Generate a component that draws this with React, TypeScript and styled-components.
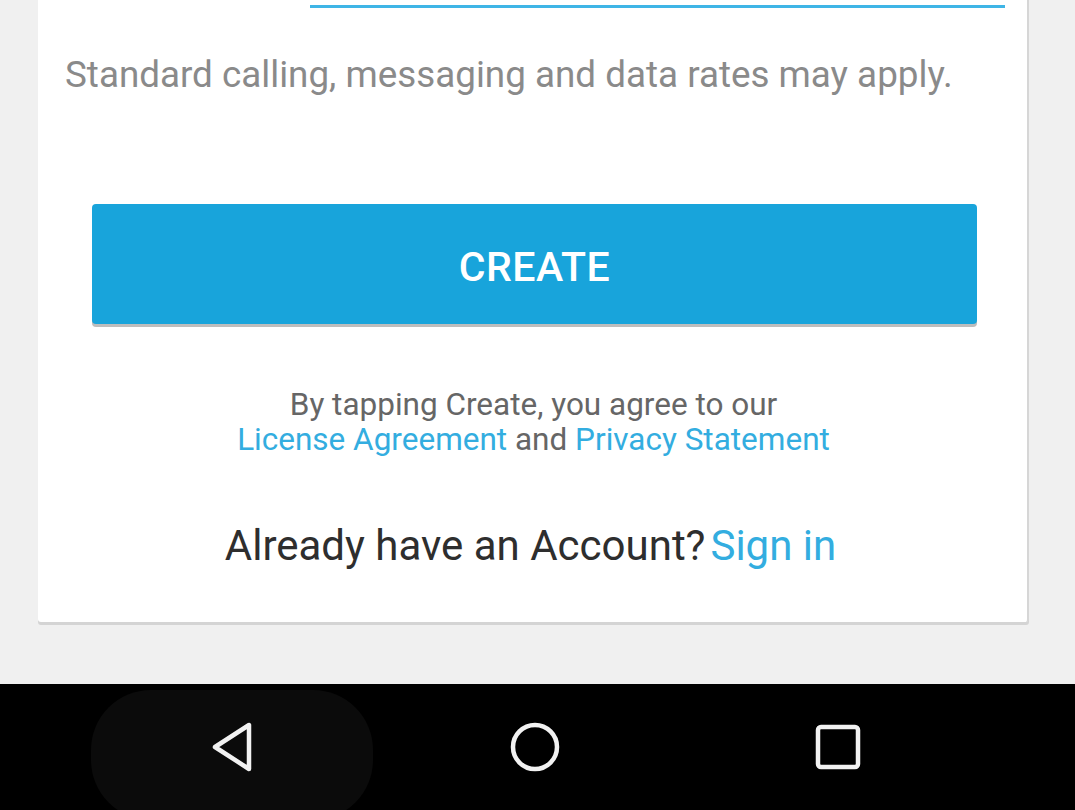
import React from "react";
import styled, { createGlobalStyle } from "styled-components";

const Global = createGlobalStyle`
  html, body { margin: 0; padding: 0; }
  body {
    background: #f0f0f0;
    font-family: Roboto, "Noto Sans", "Liberation Sans", sans-serif;
    overflow: hidden;
  }
  #root { height: 810px; }
`;

const Screen = styled.div`
  height: 810px;
  display: flex;
  flex-direction: column;
  background: #f0f0f0;
`;

const Content = styled.div`
  flex: 1;
  padding: 0 46px 0 38px;
`;

const Card = styled.div`
  height: 622px;
  box-sizing: border-box;
  background: #ffffff;
  border-right: 2px solid #d6d6d6;
  border-bottom-right-radius: 3px;
  border-bottom-left-radius: 3px;
  box-shadow: 0 3px 0 #d4d4d4;
  display: flex;
  flex-direction: column;
`;

const FieldUnderline = styled.div`
  height: 3px;
  margin: 5px 22px 0 272px;
  background: #3fb5e6;
`;

const Disclaimer = styled.p`
  margin: 45px 0 0 27px;
  font-size: 36.8px;
  line-height: 44px;
  color: #8a8a8a;
  white-space: nowrap;
`;

const CreateButton = styled.button`
  margin: 107px 50px 0 54px;
  height: 120px;
  flex-shrink: 0;
  border: none;
  border-radius: 4px;
  background: #18a4db;
  box-shadow: 0 3px 0 #bdbdbd;
  color: #ffffff;
  font-family: Roboto, "Noto Sans", sans-serif;
  font-weight: 500;
  font-size: 41px;
  letter-spacing: 0.5px;
  display: flex;
  align-items: center;
  justify-content: center;
  padding: 5px 0 0;
`;

const Terms = styled.p`
  margin: 63px 0 0;
  text-align: center;
  font-size: 31.5px;
  line-height: 35px;
  color: #666666;
  padding-left: 2px;
`;

const Link = styled.span<{ $gap?: number }>`
  color: #33ade0;
  margin-left: ${(p) => (p.$gap ? `${p.$gap}px` : "0")};
`;

const SignInRow = styled.p`
  margin: 64px 0 0;
  text-align: center;
  font-size: 42px;
  line-height: 50px;
  color: #2e2e2e;
  padding-right: 4px;
  white-space: nowrap;
`;

const NavBar = styled.nav`
  height: 126px;
  background: #000000;
  display: flex;
  justify-content: center;
  gap: 21px;
  padding: 6px 6px 0 0;
  box-sizing: border-box;
`;

const NavButton = styled.div<{ $active?: boolean }>`
  width: 282px;
  height: 130px;
  border-radius: 60px;
  background: ${(p) => (p.$active ? "#0b0b0b" : "transparent")};
  display: flex;
  align-items: center;
  justify-content: center;
  padding-bottom: 16px;
  box-sizing: border-box;
`;

const BackIcon = () => (
  <svg width="50" height="56" viewBox="0 0 50 56">
    <path
      d="M8 28 L42 6 L42 50 Z"
      fill="none"
      stroke="#f2f2f2"
      strokeWidth="4.5"
      strokeLinejoin="round"
    />
  </svg>
);

const HomeIcon = () => (
  <svg width="54" height="54" viewBox="0 0 54 54">
    <circle cx="27" cy="27" r="22" fill="none" stroke="#f2f2f2" strokeWidth="4.5" />
  </svg>
);

const RecentsIcon = () => (
  <svg width="50" height="50" viewBox="0 0 50 50">
    <rect x="5" y="5" width="40" height="40" rx="3" fill="none" stroke="#f2f2f2" strokeWidth="4.5" />
  </svg>
);

export default function App() {
  return (
    <>
      <Global />
      <Screen>
        <Content>
          <Card>
            <FieldUnderline />
            <Disclaimer>Standard calling, messaging and data rates may apply.</Disclaimer>
            <CreateButton>CREATE</CreateButton>
            <Terms>
              By tapping Create, you agree to our
              <br />
              <Link>License Agreement</Link> and <Link>Privacy Statement</Link>
            </Terms>
            <SignInRow>
              Already have an Account?<Link $gap={5}>Sign in</Link>
            </SignInRow>
          </Card>
        </Content>
        <NavBar>
          <NavButton $active>
            <BackIcon />
          </NavButton>
          <NavButton>
            <HomeIcon />
          </NavButton>
          <NavButton>
            <RecentsIcon />
          </NavButton>
        </NavBar>
      </Screen>
    </>
  );
}
